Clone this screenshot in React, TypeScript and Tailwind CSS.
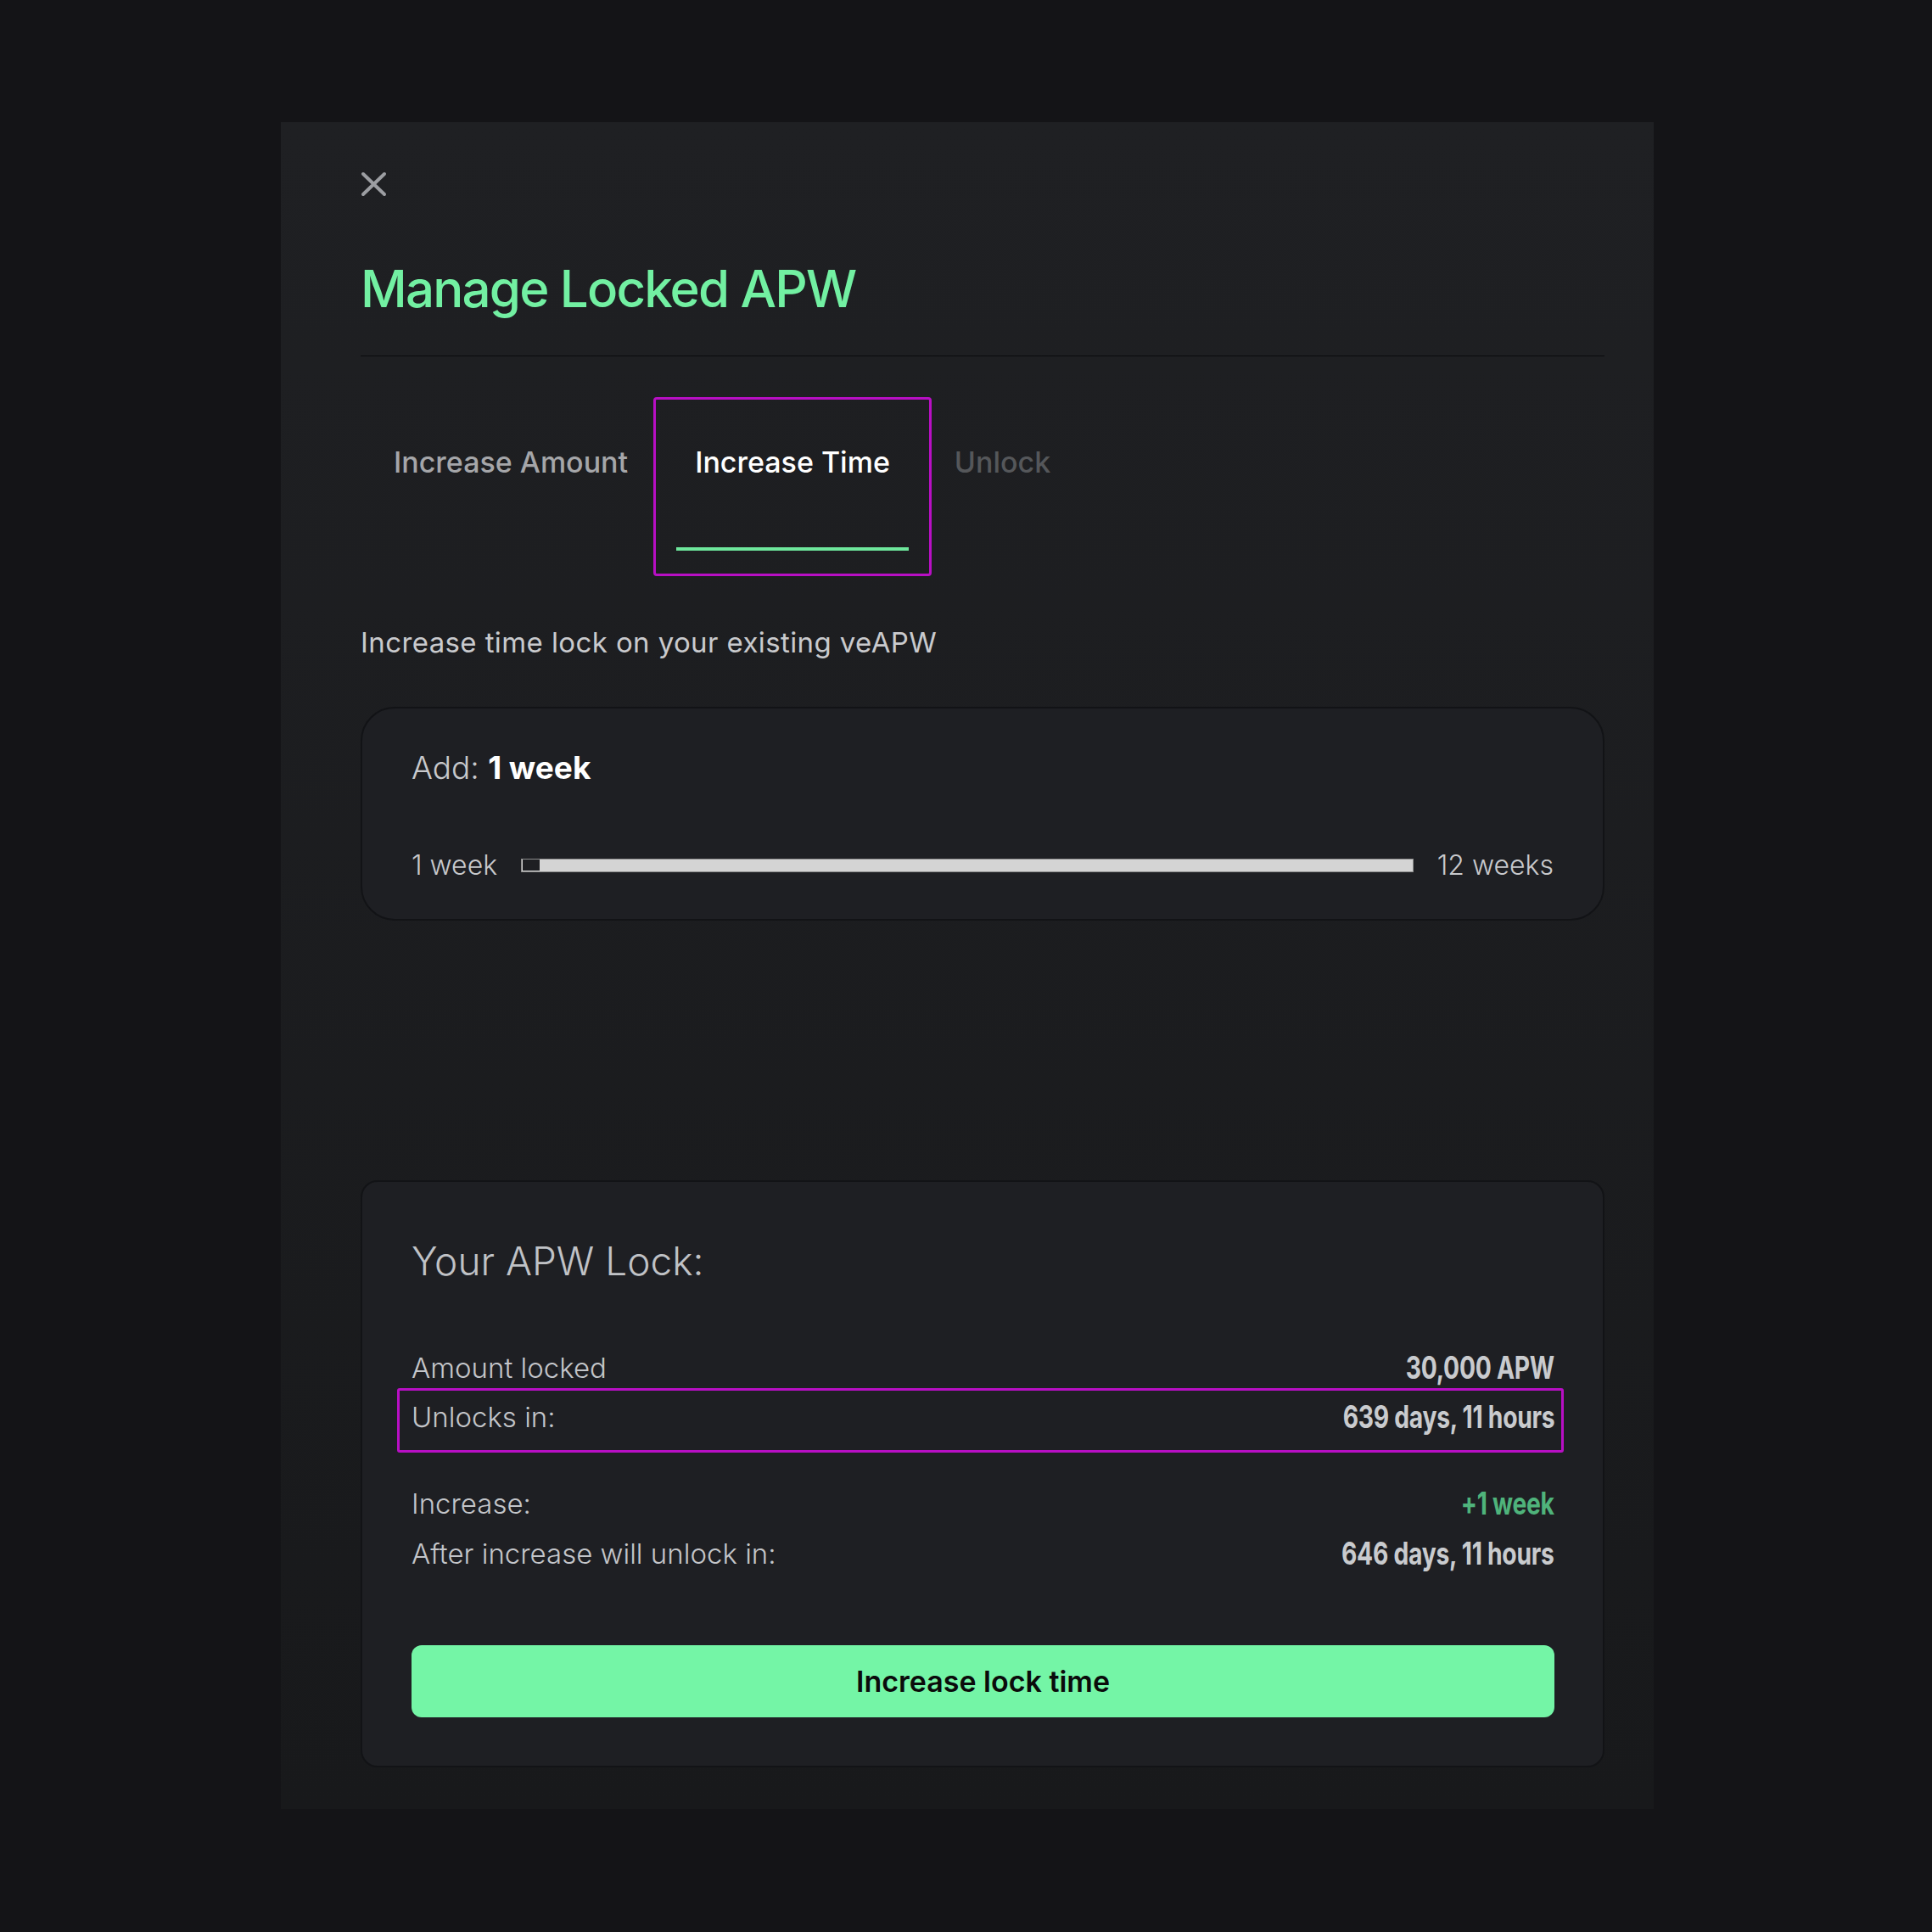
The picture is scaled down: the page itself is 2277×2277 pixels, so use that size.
import React from "react";

const rows = [
  { label: "Amount locked", value: "30,000 APW" },
];

function CloseIcon() {
  return (
    <svg width="31" height="30" viewBox="0 0 31 30" fill="none">
      <path d="M3 3 L28 27 M28 3 L3 27" stroke="#9c9ea2" strokeWidth="4" strokeLinecap="round" />
    </svg>
  );
}

function Tab({ label, active, color, inner }: { label: string; active?: boolean; color: string; inner: string }) {
  return (
    <div
      className={`flex flex-col rounded-[4px] border-[3px] px-[24px] pt-[57px] pb-[27px] ${
        active ? "border-[#b80fc4]" : "border-transparent"
      }`}
    >
      <div className={`text-center text-[34px] leading-none font-medium ${inner}`} style={{ color }}>
        {label}
      </div>
      <div className={`mt-[83px] h-[4px] ${active ? "bg-[#6ee79c]" : "bg-transparent"}`} />
    </div>
  );
}

function Row({ label, value, green }: { label: string; value: string; green?: boolean }) {
  return (
    <div className="flex h-[32px] items-center justify-between">
      <span className="text-[33px] leading-[32px] font-light text-[#c3c5c9]">{label}</span>
      <span
        className={`inline-block origin-right scale-x-[0.765] text-[37px] leading-[32px] font-bold tracking-[-0.01em] ${
          green ? "text-[#4fb37b]" : "text-[#c9cbce]"
        }`}
      >
        {value}
      </span>
    </div>
  );
}

export default function App() {
  return (
    <div className="min-h-[2277px] w-[2277px] bg-[#141417] pt-[144px] [font-family:Inter,'Noto_Sans',sans-serif]">
      <div className="ml-[331px] flex h-[1988px] w-[1618px] flex-col bg-gradient-to-b from-[#1f2023] to-[#18191b] pl-[94px] pr-[58px] pt-[58px] pb-[49px]">
        <div className="h-[30px] w-[31px]">
          <CloseIcon />
        </div>

        <h1 className="mt-[78px] text-[60px] leading-none font-medium tracking-[-0.03em] text-[#72f0a2]">
          Manage Locked APW
        </h1>
        <div className="mt-[49px] h-[3px] bg-[#0a0b0d]" />

        {/* tabs */}
        <div className="mt-[48px] flex">
          <Tab label="Increase Amount" color="#a5a6a9" inner="pl-[12px] pr-[3px]" />
          <Tab label="Increase Time" active color="#ffffff" inner="px-[22px]" />
          <Tab label="Unlock" color="#55575a" inner="px-[0px]" />
        </div>

        <p className="mt-[62px] text-[33px] leading-none tracking-[0.012em] text-[#c9cacd]">
          Increase time lock on your existing veAPW
        </p>

        {/* slider card */}
        <div className="mt-[59px] rounded-[40px] border-2 border-[#121316] bg-[#1e1f23] px-[58px] pt-[51px] pb-[47px]">
          <div className="text-[37px] leading-none text-[#c8c9cc]">
            <span className="font-light">Add: </span>
            <span className="font-bold text-white">1 week</span>
          </div>
          <div className="mt-[81px] flex items-center gap-[28px]">
            <span className="text-[32px] leading-none font-light text-[#c8c9cc]">1 week</span>
            <div className="flex h-[16px] flex-1 border border-[#8d8d8d] bg-[#d4d4d4]">
              <div className="ml-[1px] h-[13px] w-[20px] bg-[#1e1f23]" />
            </div>
            <span className="text-[32px] leading-none font-light text-[#c8c9cc]">12 weeks</span>
          </div>
        </div>

        {/* lock summary */}
        <div className="mt-[306px] rounded-[20px] border-2 border-[#121316] bg-[#1e1f23] pl-[58px] pr-[57px] pt-[70px] pb-[57px]">
          <h2 className="text-[46px] leading-none font-light text-[#c0c2c6]">Your APW Lock:</h2>

          <div className="mt-[87px]">
            {rows.map((r) => (
              <Row key={r.label} label={r.label} value={r.value} />
            ))}
          </div>
          <div className="mt-[8px] -ml-[17px] -mr-[11px] rounded-[3px] border-[3px] border-[#b80fc4] pl-[14px] pr-[8px] pt-[15px] pb-[23px]">
            <Row label="Unlocks in:" value="639 days, 11 hours" />
          </div>
          <div className="mt-[44px]">
            <Row label="Increase:" value="+1 week" green />
          </div>
          <div className="mt-[27px]">
            <Row label="After increase will unlock in:" value="646 days, 11 hours" />
          </div>

          <button className="mt-[92px] flex h-[85px] w-full items-center justify-center rounded-[12px] bg-[#74f5a6] text-[34px] font-semibold text-[#0b0b0b]">
            Increase lock time
          </button>
        </div>
      </div>
    </div>
  );
}
